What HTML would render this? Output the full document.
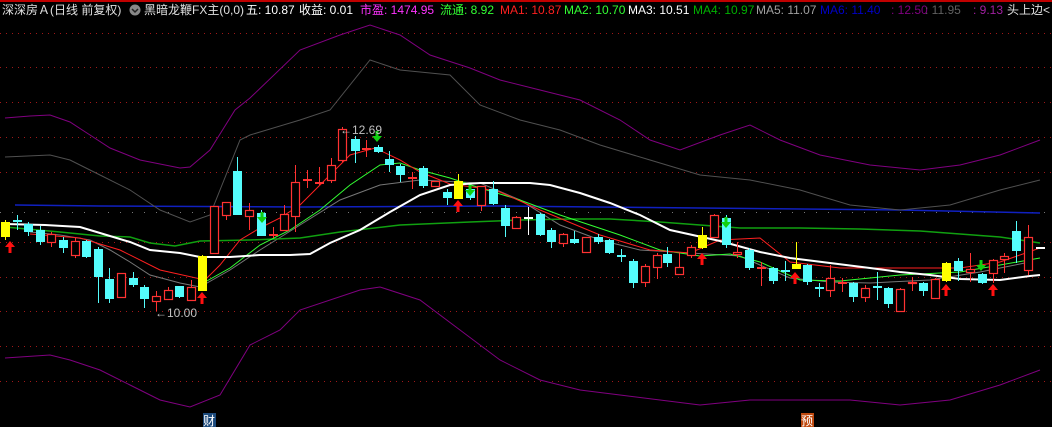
<!DOCTYPE html>
<html><head><meta charset="utf-8"><style>
html,body{margin:0;padding:0;background:#000;width:1052px;height:427px;overflow:hidden}
svg{display:block}
text{font-family:"Liberation Sans","Noto Sans CJK SC",sans-serif;font-size:12px}
</style></head><body>
<svg id="s" width="1052" height="427" viewBox="0 0 1052 427" xmlns="http://www.w3.org/2000/svg">
<rect width="1052" height="427" fill="#000"/>
<rect x="0" y="0" width="1052" height="2" fill="#c00000"/>
<g id="grid" stroke="#a01818" stroke-width="1" stroke-dasharray="1,5"></g>
<g id="lines" fill="none"></g>
<g id="candles"></g>
<g id="marks"></g>
<text x="2" y="14" fill="#e0e0e0">深深房Ａ(日线 前复权)</text>
<circle cx="135" cy="10" r="5.5" fill="#888"/>
<path d="M132 9 L135 12 L138 9" stroke="#222" stroke-width="1.5" fill="none"/>
<text x="144" y="14" fill="#e0e0e0">黑暗龙鞭FX主(0,0)</text>
<text x="246" y="14" fill="#fff">五: 10.87</text>
<text x="299" y="14" fill="#fff">收益: 0.01</text>
<text x="360" y="14" fill="#ff33ff">市盈: 1474.95</text>
<text x="440" y="14" fill="#33ff33">流通: 8.92</text>
<text x="500" y="14" fill="#ff2020">MA1: 10.87</text>
<text x="564" y="14" fill="#33ff33">MA2: 10.70</text>
<text x="628" y="14" fill="#ffffff">MA3: 10.51</text>
<text x="693" y="14" fill="#00b000">MA4: 10.97</text>
<text x="756" y="14" fill="#a0a0a0">MA5: 11.07</text>
<text x="820" y="14" fill="#0000c8">MA6: 11.40</text>
<text x="891" y="14" fill="#800080">: 12.50</text>
<text x="925" y="14" fill="#606060">: 11.95</text>
<text x="973" y="14" fill="#a020a0">: 9.13</text>
<text x="1007" y="14" fill="#e0e0e0">头上边&lt;</text>
<text x="340" y="134" fill="#c0c0c0">←12.69</text>
<text x="155" y="317" fill="#c0c0c0">←10.00</text>
<rect x="203" y="413" width="13" height="14" fill="#1c4a7c"/>
<text x="203" y="425" fill="#fff">财</text>
<rect x="801" y="413" width="13" height="14" fill="#c04a10"/>
<text x="801" y="425" fill="#fff">预</text>
</svg>
<script>
var NS="http://www.w3.org/2000/svg";
function el(p,t,a){var e=document.createElementNS(NS,t);for(var k in a)e.setAttribute(k,a[k]);document.getElementById(p).appendChild(e);return e;}
[33,67,102,137,172,242,277,311,346,381].forEach(function(y){el("grid","line",{x1:0,y1:y+.5,x2:1052,y2:y+.5});});
el("grid","line",{x1:0,y1:212.5,x2:1052,y2:212.5,stroke:"#777","stroke-dasharray":"1,11"});
function pl(pts,c,w){el("lines","polyline",{points:pts,stroke:c,"stroke-width":w});}
pl("15,205 100,206 300,207 500,206 700,208 900,210 1040,213","#1020c0",1.5);
pl("5,118 30,116 50,115 70,122 90,135 110,148 140,160 180,168 190,167 210,150 235,110 250,98 300,50 340,35 370,25 400,35 430,55 470,68 500,80 540,90 580,100 620,120 650,140 680,150 720,135 750,125 780,140 820,155 870,165 920,170 960,165 1000,155 1040,140","#800080",1);
pl("5,157 50,155 70,160 100,175 130,190 160,210 190,222 210,215 240,140 250,135 300,120 330,110 370,60 400,70 450,75 480,105 520,120 560,130 600,145 650,160 700,175 750,180 800,190 850,205 900,210 950,205 1000,190 1040,180","#505050",1);
pl("5,358 50,355 70,360 100,370 130,385 160,400 190,407 220,395 250,345 280,330 300,310 360,290 380,287 420,300 460,330 500,360 540,380 580,390 620,395 660,400 700,405 750,400 800,400 850,400 900,405 950,400 1000,385 1040,370","#800080",1);
pl("30,232 60,235 90,240 110,250 130,262 150,275 180,283 200,287 230,270 260,250 300,225 340,200 380,185 420,180 480,183 520,200 560,225 600,240 640,250 690,253 740,256 760,265 790,278 830,282 870,283 930,280 980,272 1030,262","#777",1);
pl("5,227 60,232 100,236 130,237 150,243 175,246 200,241 250,240 300,238 340,232 400,225 470,222 520,220 570,219 610,219 660,222 700,225 740,228 800,228 860,229 920,231 960,234 1000,237 1040,243","#10a010",1.5);
pl("205,282 230,268 260,245 290,230 320,210 350,185 380,165 400,163 420,170 450,178 480,188 520,200 560,215 620,235 660,250 700,256 730,254 760,262 800,280 840,281 900,275 960,272 1000,265 1040,258","#33ff33",1);
pl("30,234 80,238 120,250 160,270 205,280 220,265 240,240 260,228 280,218 300,205 320,185 340,165 350,155 375,148 400,160 420,172 450,184 480,188 500,192 540,210 600,235 650,250 690,253 720,240 760,238 790,262 840,268 900,268 960,268 1000,262 1040,248","#ff2020",1);
pl("5,224 45,225 80,227 100,233 130,242 150,250 180,253 200,257 230,257 260,255 290,255 310,254 330,243 360,230 390,212 420,195 450,185 480,183 530,183 550,185 580,193 610,203 640,215 670,230 720,241 760,252 790,258 830,263 870,268 900,272 930,275 960,279 1000,280 1030,276 1040,275","#ffffff",2);
// x,top,bot,wickTop,wickBot,type
var C=[[1,222,237,220,240,"y"],[13,221,223,215,230,"cx"],[24,224,232,222,236,"c"],[36,230,242,226,245,"c"],[47,234,242,232,247,"r"],[59,240,248,237,253,"c"],[71,241,255,238,258,"r"],[82,241,257,240,258,"c"],[94,249,277,247,303,"c"],[105,279,299,268,303,"c"],[117,273,297,273,297,"r"],[129,278,285,272,287,"c"],[140,287,299,285,308,"c"],[152,296,301,291,311,"r"],[164,290,299,287,299,"r"],[175,286,297,286,298,"c"],[187,287,300,280,300,"r"],[198,256,291,255,291,"y"],[210,206,253,206,253,"r"],[222,202,215,202,220,"r"],[233,171,215,157,215,"c"],[245,210,216,203,230,"r"],[257,213,236,210,236,"c"],[269,235,235,227,238,"rx"],[280,214,230,205,230,"r"],[291,182,216,165,232,"r"],[303,180,180,170,188,"rx"],[315,183,183,167,185,"rx"],[327,165,180,158,183,"r"],[338,129,160,127,162,"r"],[351,139,151,136,163,"c"],[362,149,149,140,157,"rx"],[374,147,152,145,153,"c"],[385,159,165,151,172,"c"],[396,166,175,164,182,"c"],[408,178,178,172,189,"rx"],[419,168,186,166,188,"c"],[431,181,186,181,186,"r"],[443,192,198,189,205,"c"],[454,181,199,174,199,"y"],[466,189,198,187,200,"c"],[477,186,205,186,211,"r"],[489,189,204,181,205,"c"],[501,208,226,205,237,"c"],[512,217,228,216,228,"r"],[524,218,218,207,235,"wx"],[536,214,235,213,236,"c"],[547,230,242,228,248,"c"],[559,234,243,233,247,"r"],[570,239,243,231,244,"c"],[582,237,252,237,252,"r"],[594,237,242,234,244,"c"],[605,240,253,239,254,"c"],[617,256,256,249,262,"cx"],[629,261,283,259,288,"c"],[641,266,282,264,287,"r"],[653,255,267,253,279,"r"],[663,254,263,247,267,"c"],[675,267,274,253,275,"r"],[687,247,255,245,258,"r"],[698,235,248,227,249,"y"],[710,215,237,214,238,"r"],[722,218,245,215,248,"c"],[733,252,254,242,258,"r"],[745,250,268,248,270,"c"],[757,268,268,262,286,"rx"],[769,268,281,267,284,"c"],[781,271,271,261,281,"cx"],[792,264,269,242,269,"y"],[803,265,282,264,285,"c"],[815,288,288,283,297,"cx"],[826,278,290,265,297,"r"],[838,283,283,278,292,"rx"],[849,283,297,282,302,"c"],[861,288,297,285,302,"r"],[873,287,287,272,300,"cx"],[884,288,304,287,308,"c"],[896,289,311,288,311,"r"],[908,282,283,277,291,"r"],[919,283,291,282,296,"c"],[931,279,298,278,298,"r"],[942,263,281,262,282,"y"],[954,261,271,258,281,"c"],[966,269,272,253,282,"r"],[978,274,283,273,284,"c"],[989,260,273,259,283,"r"],[1000,256,259,253,273,"r"],[1012,231,251,221,263,"c"],[1024,237,270,225,275,"r"],[1036,248,248,248,248,"wx"]];
C.forEach(function(c){var x=c[0],t=c[1],b=c[2],wt=c[3],wb=c[4],k=c[5];var col={y:"#ffff00",c:"#54fcfc",cx:"#54fcfc",r:"#ff3232",rx:"#ff3232",wx:"#ffffff"}[k];var cx=x+4.5;
el("candles","line",{x1:cx,y1:wt,x2:cx,y2:wb,stroke:col,"stroke-width":1});
if(k=="r"){el("candles","rect",{x:x+.5,y:t+.5,width:8,height:Math.max(b-t,1),fill:"#000",stroke:col,"stroke-width":1.2});}
else if(k=="y"||k=="c"){el("candles","rect",{x:x,y:t,width:9,height:Math.max(b-t,2),fill:col});}
else{el("candles","rect",{x:x,y:t-1,width:9,height:2,fill:col});}});
function up(x,y){el("marks","path",{d:"M"+(x-5)+" "+(y+6)+" L"+x+" "+y+" L"+(x+5)+" "+(y+6)+" L"+(x+1.5)+" "+(y+6)+" L"+(x+1.5)+" "+(y+12)+" L"+(x-1.5)+" "+(y+12)+" L"+(x-1.5)+" "+(y+6)+"Z",fill:"#ff1010"});}
function dn(x,y){el("marks","path",{d:"M"+(x-1.5)+" "+y+" L"+(x+1.5)+" "+y+" L"+(x+1.5)+" "+(y+5)+" L"+(x+5)+" "+(y+5)+" L"+x+" "+(y+11)+" L"+(x-5)+" "+(y+5)+" L"+(x-1.5)+" "+(y+5)+"Z",fill:"#10d010"});}
up(10,241);up(202,292);up(458,200);up(702,253);up(795,272);up(946,284);up(993,284);
dn(262,212);dn(377,131);dn(470,185);dn(726,217);dn(981,260);
</script>
</body></html>
